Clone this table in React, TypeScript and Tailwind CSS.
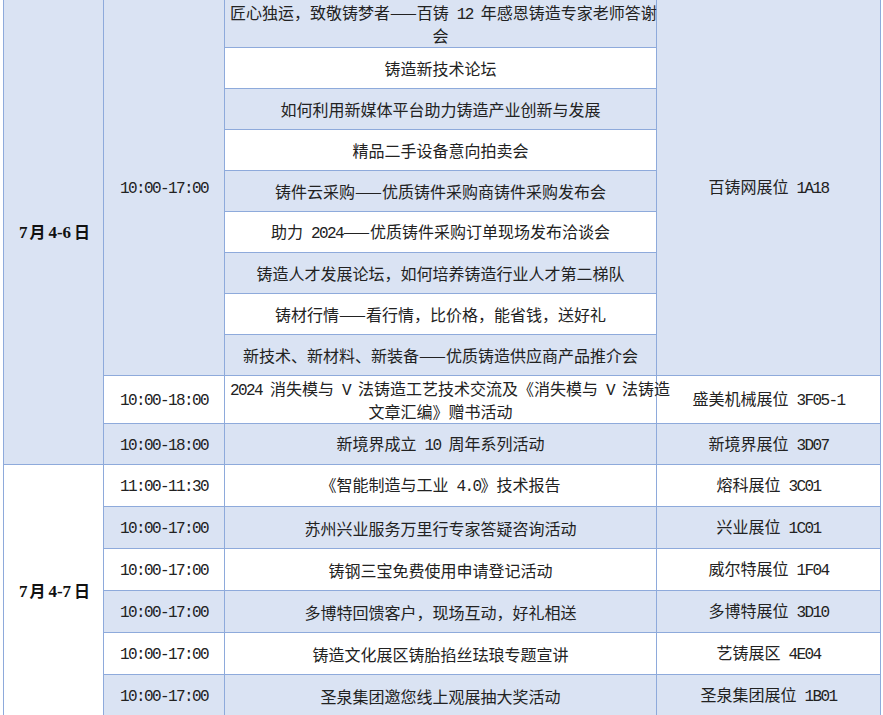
import React from "react";

type Row = {
  date?: { text: [string, string, string, string]; span: number; blue: boolean };
  time?: { text: string; span: number };
  title: string[];
  booth?: { text: string; span: number };
  blue: boolean;
  tall?: boolean;
};

// ASCII runs get a narrow half-width look, like the original's song-style digits
const Mixed = ({ s }: { s: string }) => {
  const parts = s.split(/([\x20-\x7e]+)/).filter((p) => p !== "");
  return (
    <>
      {parts.map((p, i) =>
        /^[\x20-\x7e]+$/.test(p) ? (
          <span
            key={i}
            className="font-['Liberation_Mono',monospace] text-[16px] tracking-[-1.6px] whitespace-pre"
          >
            {p}
          </span>
        ) : (
          <span key={i}>{p}</span>
        )
      )}
    </>
  );
};

const rows: Row[] = [
  {
    date: { text: ["7", "月", "4-6", "日"], span: 11, blue: true },
    time: { text: "10:00-17:00", span: 9 },
    title: ["匠心独运，致敬铸梦者——百铸 12 年感恩铸造专家老师答谢", "会"],
    booth: { text: "百铸网展位 1A18", span: 9 },
    blue: true,
    tall: true,
  },
  { title: ["铸造新技术论坛"], blue: false },
  { title: ["如何利用新媒体平台助力铸造产业创新与发展"], blue: true },
  { title: ["精品二手设备意向拍卖会"], blue: false },
  { title: ["铸件云采购——优质铸件采购商铸件采购发布会"], blue: true },
  { title: ["助力 2024——优质铸件采购订单现场发布洽谈会"], blue: false },
  { title: ["铸造人才发展论坛，如何培养铸造行业人才第二梯队"], blue: true },
  { title: ["铸材行情——看行情，比价格，能省钱，送好礼"], blue: false },
  { title: ["新技术、新材料、新装备——优质铸造供应商产品推介会"], blue: true },
  {
    time: { text: "10:00-18:00", span: 1 },
    title: ["2024 消失模与 V 法铸造工艺技术交流及《消失模与 V 法铸造", "文章汇编》赠书活动"],
    booth: { text: "盛美机械展位 3F05-1", span: 1 },
    blue: false,
    tall: true,
  },
  {
    time: { text: "10:00-18:00", span: 1 },
    title: ["新境界成立 10 周年系列活动"],
    booth: { text: "新境界展位 3D07", span: 1 },
    blue: true,
  },
  {
    date: { text: ["7", "月", "4-7", "日"], span: 6, blue: false },
    time: { text: "11:00-11:30", span: 1 },
    title: ["《智能制造与工业 4.0》技术报告"],
    booth: { text: "熔科展位 3C01", span: 1 },
    blue: false,
  },
  {
    time: { text: "10:00-17:00", span: 1 },
    title: ["苏州兴业服务万里行专家答疑咨询活动"],
    booth: { text: "兴业展位 1C01", span: 1 },
    blue: true,
  },
  {
    time: { text: "10:00-17:00", span: 1 },
    title: ["铸钢三宝免费使用申请登记活动"],
    booth: { text: "威尔特展位 1F04", span: 1 },
    blue: false,
  },
  {
    time: { text: "10:00-17:00", span: 1 },
    title: ["多博特回馈客户，现场互动，好礼相送"],
    booth: { text: "多博特展位 3D10", span: 1 },
    blue: true,
  },
  {
    time: { text: "10:00-17:00", span: 1 },
    title: ["铸造文化展区铸胎掐丝珐琅专题宣讲"],
    booth: { text: "艺铸展区 4E04", span: 1 },
    blue: false,
  },
  {
    time: { text: "10:00-17:00", span: 1 },
    title: ["圣泉集团邀您线上观展抽大奖活动"],
    booth: { text: "圣泉集团展位 1B01", span: 1 },
    blue: true,
  },
];

const cell = "border border-[#8eaadb] px-[5px] text-center align-middle";

export default function App() {
  return (
    <div className="min-h-screen bg-white overflow-hidden">
      <table className="ml-[3px] -mt-px w-[877px] table-fixed border-collapse font-['Noto_Sans_CJK_SC',sans-serif] text-[16px] leading-[20px] text-[#222]">
        <colgroup>
          <col className="w-[100px]" />
          <col className="w-[121px]" />
          <col className="w-[432px]" />
          <col className="w-[224px]" />
        </colgroup>
        <tbody>
          {rows.map((r, i) => {
            const bg = r.blue ? "bg-[#dae3f3]" : "bg-white";
            return (
              <tr key={i} className={r.tall ? "h-[48px]" : i >= 11 ? "h-[42px]" : "h-[41px]"}>
                {r.date && (
                  <td
                    rowSpan={r.date.span}
                    className={`${cell} ${r.date.blue ? "bg-[#dae3f3]" : "bg-white"} font-bold text-[#111]`}
                  >
                    <span className="font-['Liberation_Serif',serif] text-[17px] px-[2px]">{r.date.text[0]}</span>
                    <span>{r.date.text[1]}</span>
                    <span className="font-['Liberation_Serif',serif] text-[17px] px-[3px]">{r.date.text[2]}</span>
                    <span>{r.date.text[3]}</span>
                  </td>
                )}
                {r.time && (
                  <td rowSpan={r.time.span} className={`${cell} ${bg}`}>
                    <Mixed s={r.time.text} />
                  </td>
                )}
                <td className={`${cell} ${bg}`}>
                  {r.title.map((line, j) => (
                    <div key={j} className="whitespace-nowrap">
                      <Mixed s={line} />
                    </div>
                  ))}
                </td>
                {r.booth && (
                  <td rowSpan={r.booth.span} className={`${cell} ${bg}`}>
                    <Mixed s={r.booth.text} />
                  </td>
                )}
              </tr>
            );
          })}
        </tbody>
      </table>
    </div>
  );
}
